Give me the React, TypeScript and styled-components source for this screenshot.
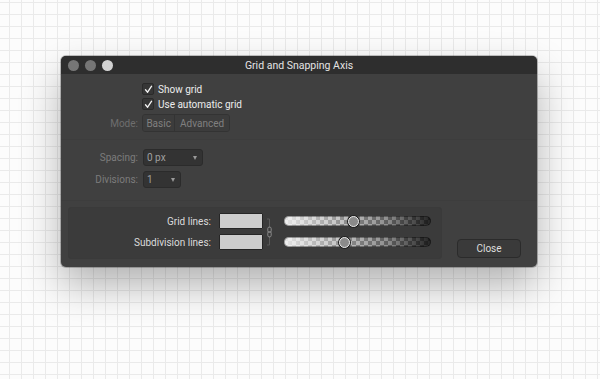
import React from "react";
import styled, { createGlobalStyle } from "styled-components";

const Global = createGlobalStyle`
  html, body { margin: 0; padding: 0; }
  body {
    width: 600px; height: 379px; overflow: hidden;
    font-family: Roboto, "Liberation Sans", Arial, sans-serif;
  }
`;

const Stage = styled.div`
  width: 600px;
  height: 379px;
  box-sizing: border-box;
  padding: 56px 0 0 61px;
  background-color: #fcfcfc;
  background-image:
    linear-gradient(to right, #eaeaea 1px, transparent 1px),
    linear-gradient(to bottom, #eaeaea 1px, transparent 1px);
  background-size: 12px 12px;
  background-position: 9px 2px;
`;

const Window = styled.div`
  width: 476px;
  height: 211px;
  background: #404040;
  border-radius: 5px;
  box-shadow: 0 18px 40px rgba(0, 0, 0, 0.3), 0 0 0 1px rgba(0, 0, 0, 0.22);
  overflow: hidden;
  display: flex;
  flex-direction: column;
`;

const TitleBar = styled.div`
  height: 18px;
  background: #2e2e2e;
  display: grid;
  grid-template-columns: 60px 1fr 60px;
  align-items: center;
  padding: 0 0 0 7px;
  box-sizing: border-box;
`;

const Lights = styled.div`
  display: flex;
  gap: 6px;
`;

const Light = styled.span<{ $c: string }>`
  width: 11px;
  height: 11px;
  border-radius: 50%;
  background: ${(p) => p.$c};
`;

const Title = styled.div`
  text-align: center;
  color: #e4e4e4;
  font-size: 10.5px;
  margin-left: -7px;
`;

const Section = styled.div<{ $pt: number; $h: number; $line?: boolean }>`
  height: ${(p) => p.$h}px;
  box-sizing: border-box;
  padding-top: ${(p) => p.$pt}px;
  border-bottom: ${(p) => (p.$line ? "1px solid #3d3d3d" : "none")};
  display: flex;
  flex-direction: column;
`;

const Row = styled.div<{ $h: number; $mb?: number }>`
  display: grid;
  grid-template-columns: 77px auto;
  column-gap: 4px;
  align-items: center;
  height: ${(p) => p.$h}px;
  margin-bottom: ${(p) => p.$mb ?? 0}px;
`;

const Label = styled.div<{ $color?: string }>`
  text-align: right;
  font-size: 10px;
  color: ${(p) => p.$color ?? "#7c7c7c"};
`;

const CheckWrap = styled.label`
  grid-column: 2;
  display: flex;
  align-items: center;
  gap: 4px;
  font-size: 10px;
  color: #ededed;
`;

const CheckBox = styled.span`
  width: 10px;
  height: 10px;
  border-radius: 2px;
  background: #363636;
  border: 1px solid #2a2a2a;
  display: flex;
  align-items: center;
  justify-content: center;
`;

const Segmented = styled.div`
  display: flex;
  height: 18px;
  border: 1px solid #333;
  border-radius: 3px;
  overflow: hidden;
  box-sizing: border-box;
  width: 88px;
`;

const Seg = styled.div<{ $w: number }>`
  width: ${(p) => p.$w}px;
  display: flex;
  align-items: center;
  justify-content: center;
  font-size: 10px;
  color: #808080;
  background: #3c3c3c;
  & + & { border-left: 1px solid #333; }
`;

const Select = styled.div<{ $w: number }>`
  width: ${(p) => p.$w}px;
  height: 17px;
  box-sizing: border-box;
  background: #333333;
  border: 1px solid #2b2b2b;
  border-radius: 3px;
  display: flex;
  align-items: center;
  justify-content: space-between;
  padding: 0 5px 0 3px;
  font-size: 10px;
  color: #a0a0a0;
  margin-left: 1px;
`;

const Caret = styled.span`
  width: 0;
  height: 0;
  border-left: 2.5px solid transparent;
  border-right: 2.5px solid transparent;
  border-top: 4px solid #9a9a9a;
`;

const Bottom = styled.div`
  flex: 1;
  display: flex;
  align-items: flex-start;
  padding: 6px 0 0 7px;
  box-sizing: border-box;
  gap: 15px;
`;

const Inset = styled.div`
  width: 374px;
  height: 52px;
  box-sizing: border-box;
  background: #3b3b3b;
  border: 1px solid #3a3a3a;
  border-radius: 3px;
  display: grid;
  grid-template-columns: 150px 44px 21px 147px;
  grid-template-rows: 16px 16px;
  row-gap: 5px;
  align-content: start;
  align-items: center;
  padding-top: 5px;
`;

const InsetLabel = styled.div`
  text-align: right;
  padding-right: 8px;
  font-size: 10px;
  color: #dcdcdc;
`;

const Swatch = styled.div`
  height: 16px;
  background: #cdcdcd;
  border: 1px solid #262626;
  box-sizing: border-box;
  border-radius: 1px;
`;

const Link = styled.div`
  grid-column: 3;
  grid-row: 1 / span 2;
  display: flex;
  align-items: center;
  padding-left: 3px;
`;

const Track = styled.div`
  position: relative;
  height: 10px;
  border-radius: 5px;
  background:
    linear-gradient(to right, rgba(250,250,250,0.85), rgba(215,215,215,0.25) 40%, rgba(40,40,40,0.3) 70%, rgba(10,10,10,0.85)),
    repeating-conic-gradient(#bcbcbc 0 25%, #777777 0 50%) 0 0 / 8px 8px;
  box-shadow: inset 0 0 0 1px rgba(0,0,0,0.35);
`;

const Knob = styled.span`
  position: absolute;
  top: 50%;
  width: 9px;
  height: 9px;
  margin: -5.5px 0 0 -5.5px;
  border-radius: 50%;
  background: #8a8a8a;
  border: 1px solid #eeeeee;
  box-shadow: 0 0 0 1px #222;
`;

const CloseButton = styled.button`
  margin-top: 32px;
  width: 64px;
  height: 19px;
  background: #3a3a3a;
  border: 1px solid #2b2b2b;
  border-radius: 4px;
  color: #dedede;
  font-family: inherit;
  font-size: 10px;
  padding: 0;
`;

const Check = () => (
  <svg width="9" height="9" viewBox="0 0 9 9">
    <path d="M1.5 4.8 L3.6 7.2 L7.6 1.2" fill="none" stroke="#f2f2f2" strokeWidth="1.3" strokeLinecap="round" strokeLinejoin="round" />
  </svg>
);

const ChainIcon = () => (
  <svg width="8" height="30" viewBox="0 0 8 30">
    <path d="M1 2 H3.5 V11 M3.5 19 V28 H1" fill="none" stroke="#5a5a5a" strokeWidth="1" />
    <rect x="1.8" y="10" width="3.4" height="5.5" rx="1.7" fill="none" stroke="#8a8a8a" strokeWidth="1" />
    <rect x="1.8" y="14.5" width="3.4" height="5.5" rx="1.7" fill="none" stroke="#8a8a8a" strokeWidth="1" />
  </svg>
);

export default function App() {
  return (
    <>
      <Global />
      <Stage>
        <Window>
          <TitleBar>
            <Lights>
              <Light $c="#767676" />
              <Light $c="#767676" />
              <Light $c="#d2d2d2" />
            </Lights>
            <Title>Grid and Snapping Axis</Title>
            <span />
          </TitleBar>
          <Section $pt={8} $h={66} $line>
            <Row $h={14} $mb={1}>
              <CheckWrap><CheckBox><Check /></CheckBox>Show grid</CheckWrap>
            </Row>
            <Row $h={14} $mb={3}>
              <CheckWrap><CheckBox><Check /></CheckBox>Use automatic grid</CheckWrap>
            </Row>
            <Row $h={18}>
              <Label $color="#6e6e6e">Mode:</Label>
              <Segmented>
                <Seg $w={32}>Basic</Seg>
                <Seg $w={55}>Advanced</Seg>
              </Segmented>
            </Row>
          </Section>
          <Section $pt={9} $h={61} $line>
            <Row $h={17} $mb={5}>
              <Label>Spacing:</Label>
              <Select $w={60}>0 px<Caret /></Select>
            </Row>
            <Row $h={17}>
              <Label>Divisions:</Label>
              <Select $w={38}>1<Caret /></Select>
            </Row>
          </Section>
          <Bottom>
            <Inset>
              <InsetLabel>Grid lines:</InsetLabel>
              <Swatch />
              <Link><ChainIcon /></Link>
              <Track style={{ gridColumn: 4, gridRow: 1 }}>
                <Knob style={{ left: "47.5%" }} />
              </Track>
              <InsetLabel style={{ gridColumn: 1, gridRow: 2 }}>Subdivision lines:</InsetLabel>
              <Swatch style={{ gridColumn: 2, gridRow: 2 }} />
              <Track style={{ gridColumn: 4, gridRow: 2 }}>
                <Knob style={{ left: "41%" }} />
              </Track>
            </Inset>
            <CloseButton>Close</CloseButton>
          </Bottom>
        </Window>
      </Stage>
    </>
  );
}
